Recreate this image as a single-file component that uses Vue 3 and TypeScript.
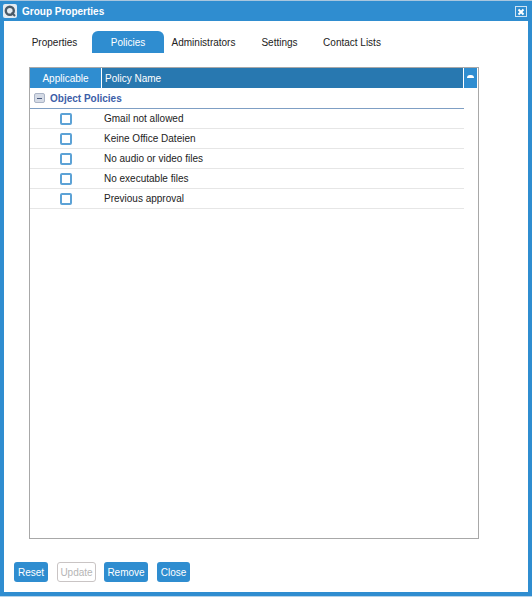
<script setup lang="ts">
const tabs = [
  { label: 'Properties', w: 75, active: false },
  { label: 'Policies', w: 72, active: true },
  { label: 'Administrators', w: 79, active: false },
  { label: 'Settings', w: 73, active: false },
  { label: 'Contact Lists', w: 72, active: false },
]
const policies = ['Gmail not allowed', 'Keine Office Dateien', 'No audio or video files', 'No executable files', 'Previous approval']
</script>

<template>
  <div class="window">
    <header class="titlebar">
      <svg class="logo" width="14" height="14" viewBox="0 0 14 14">
        <rect width="14" height="14" rx="2" fill="#e4ebf1" />
        <circle cx="6.8" cy="6.8" r="4" fill="none" stroke="#4a5a68" stroke-width="2.4" />
        <path d="M8.5 8.5 L12 12" stroke="#4a5a68" stroke-width="2" />
      </svg>
      <span class="title">Group Properties</span>
      <span class="close-box">
        <svg width="8" height="8" viewBox="0 0 8 8"><path d="M1.5 1.5 L6.5 6.5 M6.5 1.5 L1.5 6.5" stroke="#fff" stroke-width="2" /></svg>
      </span>
    </header>
    <main class="body">
      <nav class="tabs">
        <div v-for="t in tabs" :key="t.label" class="tab" :class="{ active: t.active }" :style="{ width: t.w + 'px' }">{{ t.label }}</div>
      </nav>
      <section class="grid">
        <div class="grid-head">
          <div class="col-app">Applicable</div>
          <div class="col-name">Policy Name</div>
          <div class="col-sort"><span class="sort-mark"></span></div>
        </div>
        <div class="group">
          <span class="toggle"><span class="minus"></span></span>
          <span class="group-label">Object Policies</span>
        </div>
        <div v-for="p in policies" :key="p" class="row">
          <div class="cell-check"><span class="check"></span></div>
          <div class="cell-name">{{ p }}</div>
        </div>
      </section>
      <footer class="actions">
        <button class="btn reset">Reset</button>
        <button class="btn update" disabled>Update</button>
        <button class="btn remove">Remove</button>
        <button class="btn close">Close</button>
      </footer>
    </main>
  </div>
</template>

<style>
html, body { margin: 0; background: #fff; }
</style>

<style scoped>
.window {
  width: 532px;
  height: 597px;
  box-sizing: border-box;
  background: #2f8dd0;
  border-top: 1px solid #a9c6de;
  border-bottom: 1px solid #b5d3ea;
  padding: 0 4px 4px 4px;
  display: flex;
  flex-direction: column;
  font-family: "Liberation Sans", Arial, sans-serif;
  font-size: 10px;
  color: #222;
}
.titlebar {
  height: 20px;
  flex: none;
  display: flex;
  align-items: center;
  color: #fff;
  margin-left: -1px;
}
.logo { flex: none; margin-top: -1px; }
.title { font-weight: bold; margin-left: 5px; margin-top: 1px; }
.close-box {
  margin-left: auto;
  width: 10px;
  height: 9px;
  border: 1px solid #cfe3f3;
  display: flex;
  align-items: center;
  justify-content: center;
  margin-right: 1px;
  margin-top: 1px;
}
.body {
  flex: 1;
  background: #fff;
  display: flex;
  flex-direction: column;
  padding-left: 25px;
}
.tabs {
  margin-top: 10px;
  height: 22px;
  flex: none;
  display: flex;
  margin-left: -25px;
  padding-left: 13px;
}
.tab {
  text-align: center;
  line-height: 24px;
  flex: none;
}
.tab.active {
  background: #2f8dd0;
  color: #fff;
  border-radius: 6px 6px 0 0;
}
.grid {
  margin-top: 14px;
  width: 450px;
  height: 472px;
  box-sizing: border-box;
  border: 1px solid #a8a8a8;
  flex: none;
}
.grid-head {
  display: flex;
  height: 20px;
  padding-right: 1px;
  line-height: 22px;
  color: #fff;
}
.col-app {
  width: 71px;
  background: #2f8dd0;
  text-align: center;
  border-right: 1px solid #fff;
  flex: none;
}
.col-name {
  flex: 1;
  background: #2878b0;
  padding-left: 3px;
  border-right: 1px solid #fff;
}
.col-sort {
  width: 13px;
  flex: none;
  background: #2f8dd0;
  display: flex;
  justify-content: center;
}
.sort-mark {
  width: 7px;
  height: 3px;
  margin-top: 7px;
  background: #fff;
  border-radius: 3px 3px 0 0;
}
.group {
  width: 434px;
  height: 21px;
  box-sizing: border-box;
  border-bottom: 1px solid #7f9fc4;
  display: flex;
  align-items: center;
  padding-left: 4px;
}
.toggle {
  width: 11px;
  height: 10px;
  box-sizing: border-box;
  background: #d5dbe6;
  border: 1px solid #aab4c6;
  border-radius: 2px;
  display: flex;
  align-items: center;
  justify-content: center;
}
.minus { width: 5px; height: 1px; background: #46587c; }
.group-label {
  margin-left: 5px;
  font-weight: bold;
  color: #3c5ea8;
}
.row {
  width: 434px;
  height: 20px;
  box-sizing: border-box;
  border-bottom: 1px solid #e6e6e6;
  display: flex;
  align-items: center;
}
.cell-check {
  width: 72px;
  flex: none;
  display: flex;
  justify-content: center;
}
.check {
  width: 12px;
  height: 12px;
  box-sizing: border-box;
  border: 2px solid #5ca2d6;
  border-radius: 2px;
  background: #fff;
}
.cell-name { margin-left: 2px; }
.actions {
  margin-top: 23px;
  margin-left: -15px;
  display: flex;
  flex: none;
}
.btn {
  height: 20px;
  box-sizing: border-box;
  border: none;
  border-radius: 3px;
  background: #2f8dd0;
  color: #fff;
  font: 10px "Liberation Sans", Arial, sans-serif;
  padding: 0;
  text-align: center;
}
.reset { width: 34px; margin-right: 9px; }
.update {
  width: 39px;
  margin-right: 8px;
  background: #fff;
  color: #b5b5b5;
  border: 1px solid #c9c4c4;
}
.remove { width: 44px; margin-right: 9px; }
.close { width: 33px; }
</style>
